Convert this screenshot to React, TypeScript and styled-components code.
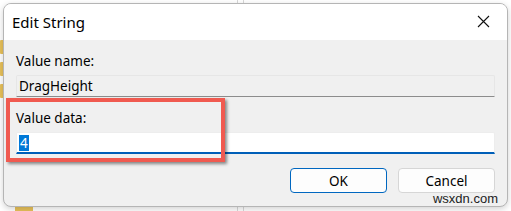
import styled, { createGlobalStyle } from 'styled-components';

const GlobalStyle = createGlobalStyle`
  html, body {
    margin: 0;
    padding: 0;
    background: #ffffff;
  }
  * {
    box-sizing: border-box;
  }
`;

const FONT = `"Noto Sans", "Open Sans", "Liberation Sans", sans-serif`;

function App() {
  return (
    <Screen>
      <GlobalStyle />
      <Backdrop>
        <GridLine style={{ left: 237 }} />
        <GridLine style={{ left: 243 }} />
        <Folder style={{ left: 0, top: 40 }} />
        <Folder style={{ left: 0, top: 62 }} />
        <Folder style={{ left: 0, top: 84 }} />
        <Folder style={{ left: 15, top: 206 }} />
      </Backdrop>

      <Dialog>
        <TitleBar>
          <Title>Edit String</Title>
          <CloseButton aria-label="Close">
            <svg width="13" height="13" viewBox="0 0 13 13">
              <path d="M1 1 L12 12 M12 1 L1 12" stroke="#111" strokeWidth="1.1" fill="none" />
            </svg>
          </CloseButton>
        </TitleBar>
        <Body>
          <Label>Value name:</Label>
          <Field readOnly>DragHeight</Field>
          <Label $gap={13}>Value data:</Label>
          <Field>
            <Selected>4</Selected>
          </Field>
          <Buttons>
            <Button $primary>OK</Button>
            <Button>Cancel</Button>
          </Buttons>
        </Body>
      </Dialog>

      <Highlight />
      <Watermark>wsxdn.com</Watermark>
    </Screen>
  );
}

const Screen = styled.div`
  position: relative;
  width: 511px;
  height: 211px;
  overflow: hidden;
  padding: 3px 3px 0 3px;
  background: #ffffff;
  font-family: ${FONT};
`;

const Backdrop = styled.div`
  position: absolute;
  inset: 0;
  z-index: 0;
`;

const GridLine = styled.div`
  position: absolute;
  top: 0;
  bottom: 0;
  width: 1px;
  background: #d8d8d8;
`;

const Folder = styled.div`
  position: absolute;
  width: 18px;
  height: 14px;
  background: #e8c15a;
  border-radius: 1px;
`;

const Dialog = styled.div`
  position: relative;
  z-index: 1;
  width: 505px;
  height: 204px;
  border: 1px solid #b5b5b5;
  border-radius: 8px;
  overflow: hidden;
  background: #f0f0f0;
  box-shadow: 0 2px 6px rgba(0, 0, 0, 0.18);
  display: flex;
  flex-direction: column;
`;

const TitleBar = styled.div`
  height: 36px;
  background: #ffffff;
  display: flex;
  align-items: center;
  justify-content: space-between;
  padding: 0 0 0 8px;
`;

const Title = styled.div`
  font-size: 15px;
  color: #000;
  margin-top: -1px;
`;

const CloseButton = styled.div`
  width: 46px;
  height: 36px;
  display: flex;
  align-items: center;
  justify-content: center;
  padding-right: 2px;
  margin-top: -2px;
`;

const Body = styled.div`
  flex: 1;
  display: flex;
  flex-direction: column;
  padding: 13px 12px 0 12px;
`;

const Label = styled.div<{ $gap?: number }>`
  font-size: 13.5px;
  line-height: 16px;
  color: #000;
  margin-top: ${({ $gap }) => $gap ?? 0}px;
`;

const Field = styled.div<{ readOnly?: boolean }>`
  margin-top: 6px;
  height: 22px;
  display: flex;
  align-items: center;
  padding-left: 2px;
  font-size: 13.5px;
  color: #000;
  background: ${({ readOnly }) => (readOnly ? '#f0f0f0' : '#ffffff')};
  border: 1px solid ${({ readOnly }) => (readOnly ? '#e6e6e6' : '#ededed')};
  border-bottom: ${({ readOnly }) => (readOnly ? '1px solid #8c8c8c' : '2px solid #005fb8')};
  border-radius: 2px 2px 0 0;
`;

const Selected = styled.span`
  background: #0078d7;
  color: #ffffff;
  line-height: 16px;
  padding: 0 1px;
`;

const Buttons = styled.div`
  margin-top: 14px;
  display: flex;
  justify-content: flex-end;
  gap: 11px;
`;

const Button = styled.div<{ $primary?: boolean }>`
  width: 97px;
  height: 25px;
  display: flex;
  align-items: center;
  justify-content: center;
  font-size: 13.5px;
  color: #000;
  background: #fdfdfd;
  border: 1px solid ${({ $primary }) => ($primary ? '#0067c0' : '#d6d6d6')};
  border-radius: 4px;
`;

const Highlight = styled.div`
  position: absolute;
  z-index: 2;
  left: 6px;
  top: 98px;
  width: 219px;
  height: 64px;
  border: 4px solid #f05a50;
  box-shadow: 2px 2px 3px rgba(0, 0, 0, 0.45);
`;

const Watermark = styled.div`
  position: absolute;
  z-index: 3;
  right: 13px;
  top: 191px;
  font-family: "Liberation Sans", sans-serif;
  font-size: 13px;
  color: #222;
`;

export default App;
